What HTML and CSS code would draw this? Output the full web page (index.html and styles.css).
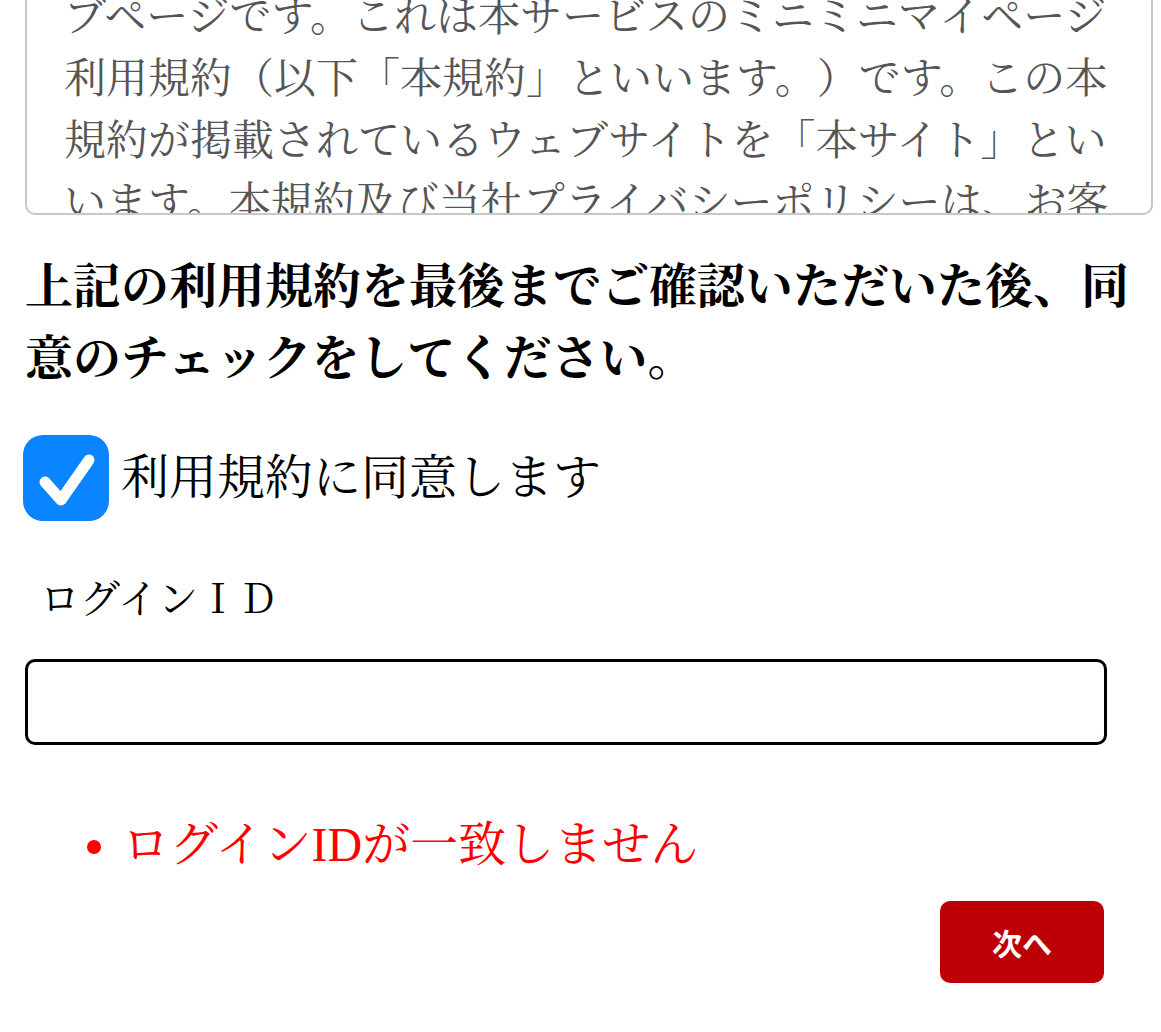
FILE: index.html
```html
<!DOCTYPE html>
<html lang="ja">
<head>
    <meta charset="UTF-8">
    <meta name="viewport" content="width=device-width, initial-scale=1.0">
    <title>利用規約への同意</title>
    <link rel="stylesheet" href="styles.css">
</head>
<body>
    <div class="container">
        <div class="terms">
            <p>この規約は、お客様が会員情報を確認されるためのウェブページです。これは本サービスのミニミニマイページ利用規約（以下「本規約」といいます。）です。この本規約が掲載されているウェブサイトを「本サイト」といいます。本規約及び当社プライバシーポリシーは、お客様が本サイトを利用する際の条件を定めるものです。</p>
        </div>

        <p class="notice">上記の利用規約を最後までご確認いただいた後、同意のチェックをしてください。</p>

        <label class="agree">
            <span class="check">
                <svg viewBox="0 0 86 86" width="86" height="86">
                    <path d="M22 47 L38 65 L66 25" fill="none" stroke="#fff" stroke-width="11" stroke-linecap="round" stroke-linejoin="round"/>
                </svg>
            </span>
            利用規約に同意します
        </label>

        <label class="field-label" for="login-id">ログインＩＤ</label>
        <input type="text" id="login-id" class="field">

        <ul class="errors">
            <li>ログインIDが一致しません</li>
        </ul>

        <div class="actions">
            <button class="next">次へ</button>
        </div>
    </div>
</body>
</html>
```

FILE: styles.css
```css
body {
    margin: 0;
    background: #fff;
    color: #000;
    font-family: 'Liberation Serif', 'Noto Serif CJK JP', 'Noto Sans CJK JP', serif;
    text-spacing-trim: space-all;
}

.container {
    padding: 0 54px 0 25px;
}

.terms {
    margin-top: -92px;
    margin-right: -46px;
    height: 289px;
    overflow: hidden;
    border: 2px solid #c8c8c8;
    border-radius: 10px;
    padding: 14px 37px 0;
    color: #555;
    font-size: 42px;
    line-height: 62px;
}

.terms p {
    margin: 0;
}

.notice {
    margin: 36px -40px 0 0;
    font-size: 48px;
    line-height: 72px;
    font-weight: bold;
}

.agree {
    display: flex;
    align-items: center;
    gap: 12px;
    margin: 40px 0 0 -2px;
    font-size: 48px;
    line-height: 86px;
}

.check {
    display: block;
    width: 86px;
    height: 86px;
    border-radius: 20px;
    background: #0a84ff;
}

.check svg {
    display: block;
}

.field-label {
    display: block;
    margin: 49px 0 0 15px;
    font-size: 40px;
    line-height: 60px;
}

.field {
    display: block;
    box-sizing: border-box;
    width: 100%;
    height: 86px;
    margin-top: 29px;
    border: 3px solid #000;
    border-radius: 10px;
    padding: 0 16px;
    font-size: 40px;
    background: #fff;
}

.errors {
    margin: 64px 0 0;
    padding-left: 97px;
    color: #f00;
    font-size: 48px;
    line-height: 72px;
}

.actions {
    display: flex;
    justify-content: flex-end;
    margin: 20px 3px 0 0;
}

.next {
    width: 164px;
    height: 82px;
    border: none;
    border-radius: 10px;
    background: #bd0006;
    color: #fff;
    font-family: 'Noto Sans CJK JP', sans-serif;
    font-size: 30px;
    font-weight: bold;
    cursor: pointer;
}
```
